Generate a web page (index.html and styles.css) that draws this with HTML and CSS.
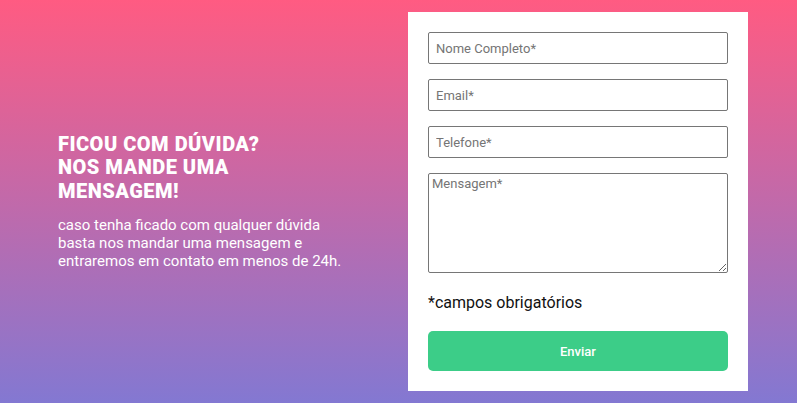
FILE: index.html
```html
<!DOCTYPE html>
<html lang="pt-BR">
<head>
<meta charset="utf-8">
<title>Contato</title>
<link rel="stylesheet" href="styles.css">
</head>
<body>
<section class="contact">
  <div class="intro">
    <h2 class="intro-title">FICOU COM DÚVIDA?<br>NOS MANDE UMA<br>MENSAGEM!</h2>
    <p class="intro-text">caso tenha ficado com qualquer dúvida<br>basta nos mandar uma mensagem e<br>entraremos em contato em menos de 24h.</p>
  </div>
  <form class="card">
    <input class="field" type="text" placeholder="Nome Completo*">
    <input class="field" type="email" placeholder="Email*">
    <input class="field" type="tel" placeholder="Telefone*">
    <textarea class="area" placeholder="Mensagem*"></textarea>
    <p class="note">*campos obrigatórios</p>
    <button class="send" type="button">Enviar</button>
  </form>
</section>
</body>
</html>
```
FILE: styles.css
```css
html, body {
  margin: 0;
  padding: 0;
}
body {
  font-family: Roboto, "Liberation Sans", sans-serif;
}
.contact {
  box-sizing: border-box;
  height: 403px;
  width: 797px;
  padding: 12px 49px 12px 58px;
  display: flex;
  align-items: center;
  background: linear-gradient(180deg, #ff5b82 0%, #8378d2 100%);
}
.intro {
  flex: 1;
  color: #fff;
}
.intro-title {
  margin: 0 0 13px;
  font-size: 20px;
  line-height: 23.5px;
  font-weight: 900;
  letter-spacing: 0.5px;
}
.intro-text {
  margin: 0;
  font-size: 15px;
  line-height: 18px;
}
.card {
  box-sizing: border-box;
  width: 340px;
  height: 379px;
  background: #fff;
  padding: 20px;
  display: flex;
  flex-direction: column;
}
.field, .area {
  box-sizing: border-box;
  width: 300px;
  border: 1px solid #767676;
  border-radius: 2px;
  font-family: Roboto, "Liberation Sans", sans-serif;
  font-size: 13px;
  color: #222;
  background: #fff;
  margin: 0;
}
.field {
  height: 32px;
  padding: 0 7px;
  margin-bottom: 15px;
}
.area {
  height: 100px;
  padding: 2px 3px;
  resize: vertical;
}
.field::placeholder, .area::placeholder {
  color: #757575;
}
.note {
  margin: 19px 0 0;
  font-size: 16px;
  line-height: 22px;
  color: #111;
}
.send {
  margin-top: 17px;
  height: 40px;
  width: 300px;
  border: none;
  border-radius: 5px;
  background: #3ccd88;
  color: #fff;
  font-family: Roboto, "Liberation Sans", sans-serif;
  font-size: 13px;
  font-weight: 500;
}
```
